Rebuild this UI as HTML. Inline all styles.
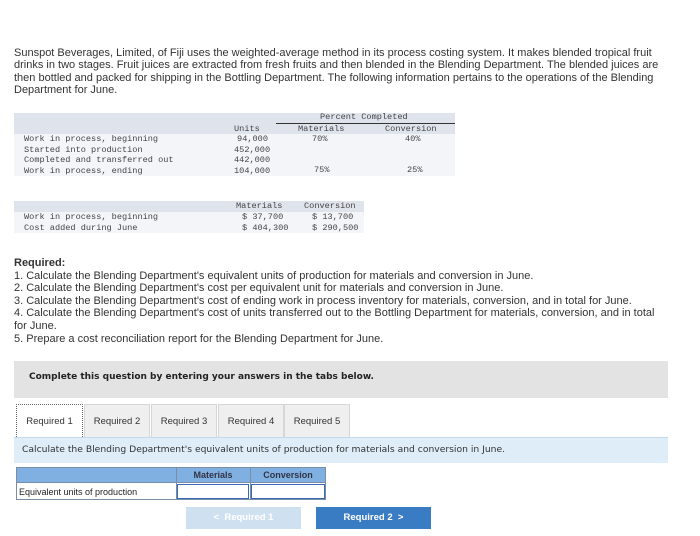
<!DOCTYPE html>
<html><head><meta charset="utf-8"><style>
body{margin:0;width:700px;height:536px;background:#fff;position:relative;overflow:hidden;font-family:"Liberation Sans",sans-serif;color:#333}
.a{position:absolute;white-space:nowrap}
.p{font-size:11px;line-height:12.4px;color:#333}
.m{font-family:"Liberation Mono",monospace;font-size:8.6px;color:#444;line-height:10.5px}
.band{position:absolute;background:#dfe3ec}
.tab{position:absolute;top:404px;height:33px;background:#efefef;border:1px solid #d6d6d6;border-bottom:none;font-size:9.5px;line-height:33px;text-align:center;color:#333;box-sizing:border-box}
</style></head><body>
<div class="a p" style="left:14px;top:47px">Sunspot Beverages, Limited, of Fiji uses the weighted-average method in its process costing system. It makes blended tropical fruit<br>drinks in two stages. Fruit juices are extracted from fresh fruits and then blended in the Blending Department. The blended juices are<br>then bottled and packed for shipping in the Bottling Department. The following information pertains to the operations of the Blending<br>Department for June.</div>

<div class="band" style="left:14px;top:113px;width:441px;height:21px"></div>
<div class="band" style="left:14px;top:134px;width:441px;height:42px;background:#f4f5f8"></div>
<div class="a" style="left:276px;top:123px;width:179px;height:1px;background:#333"></div>
<div class="a m" style="left:320px;top:112px">Percent Completed</div>
<div class="a m" style="left:234px;top:124px">Units</div>
<div class="a m" style="left:298px;top:124px">Materials</div>
<div class="a m" style="left:385px;top:124px">Conversion</div>
<div class="a m" style="left:24px;top:134px">Work in process, beginning<br>Started into production<br>Completed and transferred out<br>Work in process, ending</div>
<div class="a m" style="left:234px;top:134px;text-align:right;width:34px">94,000<br>452,000<br>442,000<br>104,000</div>
<div class="a m" style="left:312px;top:134px">70%</div>
<div class="a m" style="left:405px;top:134px">40%</div>
<div class="a m" style="left:314px;top:165px">75%</div>
<div class="a m" style="left:407px;top:165px">25%</div>

<div class="band" style="left:14px;top:201px;width:350px;height:11px"></div>
<div class="band" style="left:14px;top:212px;width:350px;height:21px;background:#f4f5f8"></div>
<div class="a m" style="left:236px;top:201px">Materials</div>
<div class="a m" style="left:304px;top:201px">Conversion</div>
<div class="a m" style="left:24px;top:212px">Work in process, beginning<br>Cost added during June</div>
<div class="a m" style="left:242px;top:212px">$ 37,700<br>$ 404,300</div>
<div class="a m" style="left:312px;top:212px">$ 13,700<br>$ 290,500</div>

<div class="a p" style="left:14px;top:257px;line-height:12.6px"><b>Required:</b><br>1. Calculate the Blending Department's equivalent units of production for materials and conversion in June.<br>2. Calculate the Blending Department's cost per equivalent unit for materials and conversion in June.<br>3. Calculate the Blending Department's cost of ending work in process inventory for materials, conversion, and in total for June.<br>4. Calculate the Blending Department's cost of units transferred out to the Bottling Department for materials, conversion, and in total<br>for June.<br>5. Prepare a cost reconciliation report for the Blending Department for June.</div>

<div class="a" style="left:14px;top:361px;width:654px;height:37px;background:#e3e3e3"></div>
<div class="a" style="left:29px;top:372px;font-family:'DejaVu Sans',sans-serif;font-weight:bold;font-size:9px;color:#222">Complete this question by entering your answers in the tabs below.</div>

<div class="tab" style="left:16px;width:67px;background:#fff;border:1px dotted #666;border-bottom:none">Required 1</div>
<div class="tab" style="left:84px;width:66px">Required 2</div>
<div class="tab" style="left:151px;width:66px">Required 3</div>
<div class="tab" style="left:218px;width:66px">Required 4</div>
<div class="tab" style="left:284px;width:66px">Required 5</div>

<div class="a" style="left:14px;top:437px;width:654px;height:25px;background:#deedf8;border-top:1px solid #c5dbec"></div>
<div class="a" style="left:22px;top:444px;font-family:'DejaVu Sans',sans-serif;font-size:9.2px;color:#333">Calculate the Blending Department's equivalent units of production for materials and conversion in June.</div>

<div class="a" style="left:16px;top:467px;width:310px;height:16px;background:#7fb0e1;border:1px solid #7a8ea5;box-sizing:border-box"></div>
<div class="a" style="left:176px;top:467px;width:1px;height:33px;background:#7a8ea5"></div>
<div class="a" style="left:250px;top:467px;width:1px;height:33px;background:#7a8ea5"></div>
<div class="a" style="left:176px;top:470px;width:74px;text-align:center;font-size:9px;font-weight:bold;color:#334">Materials</div>
<div class="a" style="left:250px;top:470px;width:76px;text-align:center;font-size:9px;font-weight:bold;color:#334">Conversion</div>
<div class="a" style="left:16px;top:483px;width:310px;height:17px;border:1px solid #7a8ea5;border-top:none;box-sizing:border-box"></div>
<div class="a" style="left:19px;top:487px;font-size:9px;color:#222">Equivalent units of production</div>
<div class="a" style="left:177px;top:484px;width:72px;height:15px;border:1px solid #3a6ab5;box-sizing:border-box"></div>
<div class="a" style="left:251px;top:484px;width:74px;height:15px;border:1px solid #3a6ab5;box-sizing:border-box"></div>

<div class="a" style="left:186px;top:507px;width:115px;height:22px;background:#cfe0f1;color:#fff;font-size:9.5px;font-weight:bold;text-align:center;line-height:22px">&lt;&nbsp; Required 1</div>
<div class="a" style="left:316px;top:507px;width:115px;height:22px;background:#3a7cc3;color:#fff;font-size:9.5px;font-weight:bold;text-align:center;line-height:22px">Required 2 &nbsp;&gt;</div>
</body></html>
